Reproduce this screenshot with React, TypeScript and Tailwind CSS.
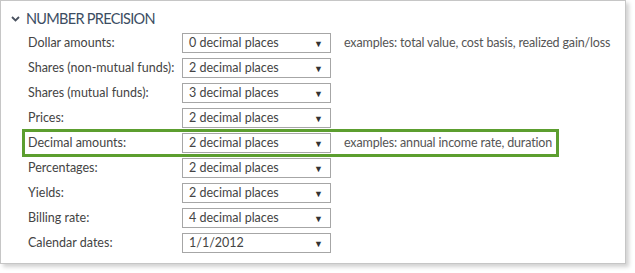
const rows = [
  { label: 'Dollar amounts:', value: '0 decimal places', note: 'examples: total value, cost basis, realized gain/loss' },
  { label: 'Shares (non-mutual funds):', value: '2 decimal places' },
  { label: 'Shares (mutual funds):', value: '3 decimal places' },
  { label: 'Prices:', value: '2 decimal places' },
  { label: 'Decimal amounts:', value: '2 decimal places', note: 'examples: annual income rate, duration', highlight: true },
  { label: 'Percentages:', value: '2 decimal places' },
  { label: 'Yields:', value: '2 decimal places' },
  { label: 'Billing rate:', value: '4 decimal places' },
  { label: 'Calendar dates:', value: '1/1/2012' },
]

function Select({ value }: { value: string }) {
  return (
    <div className="flex h-[20px] w-[149px] shrink-0 items-center justify-between border border-[#a6a6a6] bg-white pl-[6px] pr-[7px]">
      <span className="text-[#444]">{value}</span>
      <span className="text-[9px] leading-none text-[#333]">▼</span>
    </div>
  )
}

export default function App() {
  return (
    <div className="h-[273px] w-[635px] bg-white font-['Lato',sans-serif] text-[12.5px]">
      <div className="h-[264px] w-[626px] border border-[#c6c6c6] bg-white shadow-[3px_3px_4px_rgba(0,0,0,0.18)]">
        {/* Section header */}
        <div className="flex h-[32px] items-center pl-[10px] pt-[4px]">
          <svg width="9" height="6" viewBox="0 0 9 6" className="mr-[6px]">
            <path d="M1 1 L4.5 4.5 L8 1" stroke="#4a5260" strokeWidth="1.8" fill="none" />
          </svg>
          <span className="text-[14.5px] tracking-[-0.7px] text-[#3c4d62]">NUMBER PRECISION</span>
        </div>

        {/* Rows */}
        <div className="flex flex-col gap-[5px] pl-[27px]">
          {rows.map((r) => (
            <div key={r.label} className="relative flex h-[20px] items-center">
              <span className="w-[154px] shrink-0 text-[#444]">{r.label}</span>
              <Select value={r.value} />
              {r.note && (
                <span className="ml-[13px] whitespace-nowrap tracking-[-0.15px] text-[#555]">{r.note}</span>
              )}
              {r.highlight && (
                <div className="pointer-events-none absolute left-[-6px] top-[-4px] h-[28px] w-[537px] border-[3px] border-[#5c9e2f]" />
              )}
            </div>
          ))}
        </div>
      </div>
    </div>
  )
}
